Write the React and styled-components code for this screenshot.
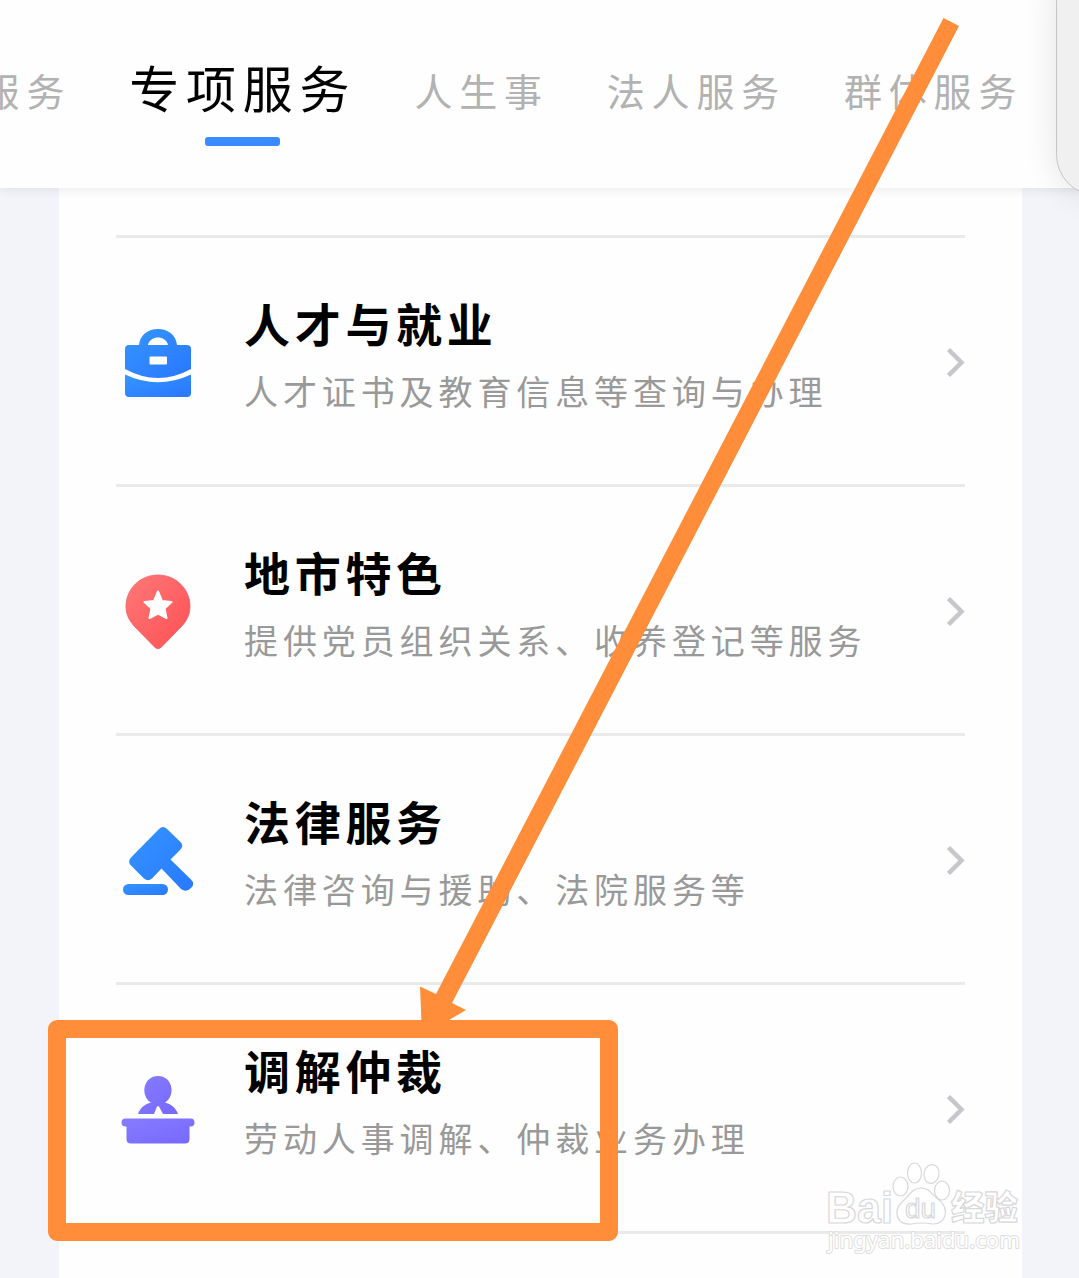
import styled, { createGlobalStyle } from "styled-components";

const GlobalStyle = createGlobalStyle`
  * {
    box-sizing: border-box;
  }

  body {
    margin: 0;
    background-color: #f3f4f9;
    font-family: "Noto Sans CJK SC", sans-serif;
  }
`;

const Page = styled.div`
  position: relative;
  width: 1079px;
  height: 1278px;
  overflow: hidden;
  background-color: #f3f4f9;
`;

const Header = styled.header`
  height: 188px;
  overflow: hidden;
  background-color: #fefefe;
`;

const HeaderShadow = styled.div`
  position: relative;
  z-index: 1;
  box-shadow: 0 1px 10px rgba(0, 0, 0, 0.09);
`;

const TabList = styled.nav`
  display: flex;
  gap: 58px;
  margin-left: -108px;
  padding-top: 50px;
`;

const Tab = styled.div`
  display: flex;
  flex-direction: column;
  align-items: center;
  flex-shrink: 0;
  height: 96px;
  color: ${(props) => (props.$active ? "#000" : "#b2b2b2")};
  font-size: ${(props) => (props.$active ? "50px" : "38px")};
  font-weight: 400;
  letter-spacing: ${(props) => (props.$active ? "6.8px" : "6.8px")};
  line-height: ${(props) => (props.$active ? "72px" : "80px")};
  white-space: nowrap;
`;

const TabLine = styled.div`
  width: 75px;
  height: 9px;
  margin-top: 15px;
  border-radius: 3px;
  background-color: #3a8bff;
`;

const Card = styled.main`
  width: 963px;
  height: 1090px;
  margin-left: 59px;
  padding: 47px 57px 0;
  background-color: #fefefe;
`;

const Row = styled.div`
  display: flex;
  align-items: center;
  height: 249px;
  border-top: 3px solid #eaeaea;
`;

const IconBox = styled.div`
  display: flex;
  width: 84px;
  height: 84px;
  flex-shrink: 0;

  svg {
    width: 84px;
    height: 84px;
  }
`;

const RowText = styled.div`
  display: flex;
  flex-direction: column;
  flex: 1;
  margin-left: 44px;
  padding-bottom: 13px;
`;

const Title = styled.div`
  height: 69px;
  color: #000;
  font-size: 46px;
  font-weight: 700;
  letter-spacing: 4.7px;
  line-height: 66px;
  white-space: nowrap;
`;

const Subtitle = styled.div`
  height: 62px;
  color: #999;
  font-size: 34px;
  font-weight: 400;
  letter-spacing: 4.9px;
  line-height: 65px;
  white-space: nowrap;
`;

const Chevron = styled.svg`
  width: 18px;
  height: 34px;
  flex-shrink: 0;
`;

const LastLine = styled.div`
  height: 3px;
  background-color: #eaeaea;
`;

const FloatPanel = styled.div`
  position: absolute;
  z-index: 2;
  top: -40px;
  right: -60px;
  width: 83px;
  height: 236px;
  border: 1px solid #c6c6c6;
  border-radius: 46px;
  background-color: #f0f0f0;
  box-shadow: 0 0 34px rgba(0, 0, 0, 0.11);
`;

const Overlay = styled.svg`
  position: absolute;
  z-index: 3;
  top: 0;
  left: 0;
  width: 1079px;
  height: 1278px;
`;

const HighlightBox = styled.div`
  position: absolute;
  z-index: 4;
  top: 1020px;
  left: 48px;
  width: 569.5px;
  height: 221px;
  border: 18px solid #ff8d3a;
  border-radius: 9px;
`;

function BriefcaseIcon() {
  return (
    <svg viewBox="0 -2 84 84">
      <defs>
        <linearGradient id="caseBlue" x1="0" y1="0" x2="1" y2="1">
          <stop offset="0" stopColor="#3597ff" />
          <stop offset="1" stopColor="#2976ff" />
        </linearGradient>
      </defs>
      <path
        fill="url(#caseBlue)"
        fillRule="evenodd"
        d="M23 24C24 14 32 8 42 8S60 14 61 24H71Q75 24 75 28V48Q42 66 9 48V28Q9 24 13 24ZM32 24H52C50 14 34 14 32 24ZM33.5 36.5V42.5Q33.5 43.5 34.5 43.5H50Q51 43.5 51 42.5V36.5Q51 35.5 50 35.5H34.5Q33.5 35.5 33.5 36.5Z"
      />
      <path
        fill="url(#caseBlue)"
        d="M9 53.5Q42 69 75 53.5V72Q75 76 71 76H13Q9 76 9 72Z"
      />
    </svg>
  );
}

function PinIcon() {
  return (
    <svg viewBox="0 -1.5 84 84">
      <defs>
        <linearGradient id="pinRed" x1="0" y1="0" x2="1" y2="1">
          <stop offset="0" stopColor="#ff7878" />
          <stop offset="1" stopColor="#ff5054" />
        </linearGradient>
      </defs>
      <path
        fill="url(#pinRed)"
        stroke="#ee6064"
        strokeWidth="0.8"
        d="M42 5.5C60 5.5 74 19.5 74 37C74 46 70 52 65 57.5L45 78Q42 80.5 39 78L19 57.5C14 52 10 46 10 37C10 19.5 24 5.5 42 5.5Z"
      />
      <path
        fill="#fff"
        stroke="#fff"
        strokeWidth="2"
        strokeLinejoin="round"
        d="M42 22L46 31.5L55.5 32.5L48.5 39L50.5 48.5L42 44L33.5 48.5L35.5 39L28.5 32.5L38 31.5Z"
      />
    </svg>
  );
}

function GavelIcon() {
  return (
    <svg viewBox="0 -3 84 84">
      <defs>
        <linearGradient id="gavelBlue" x1="0" y1="0" x2="1" y2="1">
          <stop offset="0" stopColor="#3594ff" />
          <stop offset="1" stopColor="#2979ff" />
        </linearGradient>
      </defs>
      <path
        fill="url(#gavelBlue)"
        d="M43 9Q47 5 51 9L64.5 22Q68 25.5 64.5 29.5L54.5 39.5L75 59.5Q79 63.5 75.5 67.5Q70.5 73 65 69L45.5 48.5L36 58.5Q32 62 28 58.5L14.500 45Q11.5 41.5 15 37.5Z"
      />
      <rect x="7" y="64" width="45" height="11" rx="5.5" fill="url(#gavelBlue)" />
    </svg>
  );
}

function MediatorIcon() {
  return (
    <svg viewBox="0 -4 84 84">
      <defs>
        <linearGradient id="deskPurple" x1="0" y1="0" x2="1" y2="1">
          <stop offset="0" stopColor="#867cff" />
          <stop offset="1" stopColor="#7668ff" />
        </linearGradient>
      </defs>
      <path
        fill="url(#deskPurple)"
        d="M35 32.5C24 26 27 6 42 6S60 26 49 32.5C55 34 60 38 62 44H47L43 36.5Q42 35.5 41 36.5L38 44H22C24 38 29 34 35 32.5Z"
      />
      <path
        fill="url(#deskPurple)"
        d="M9.5 48.5H74.5Q78.5 48.5 78.5 52.5T74.5 56.5H73.5V69Q73.5 73.5 69 73.5H15Q10.5 73.5 10.5 69V56.5H9.5Q5.5 56.5 5.5 52.5T9.5 48.5Z"
      />
    </svg>
  );
}

function Watermark() {
  return (
    <g fill="#fff" stroke="#d8d8d8" strokeWidth="1.2" strokeLinejoin="round">
      <text
        x="826"
        y="1223"
        fontFamily="Liberation Sans"
        fontSize="44"
        fontWeight="700"
        textLength="67"
        lengthAdjust="spacingAndGlyphs"
      >
        Bai
      </text>
      <ellipse cx="900.5" cy="1186.5" rx="7.5" ry="9.5" />
      <ellipse cx="914.5" cy="1173" rx="7" ry="10" />
      <ellipse cx="931.5" cy="1174" rx="7.5" ry="9.5" transform="rotate(10 931.5 1174)" />
      <ellipse cx="942" cy="1190.5" rx="7.5" ry="9.5" />
      <path d="M921 1188C930 1188 932 1195 939 1200C950 1209 946 1224 933 1224Q921 1222 911 1224C896 1225 893 1211 902 1202C909 1197 911 1188 921 1188Z" />
      <text
        x="905"
        y="1218"
        fontFamily="Liberation Sans"
        fontSize="27"
        textLength="31"
        lengthAdjust="spacingAndGlyphs"
      >
        du
      </text>
      <text
        x="951"
        y="1220"
        fontFamily="Noto Sans CJK SC"
        fontSize="34"
        fontWeight="900"
        textLength="67"
        lengthAdjust="spacingAndGlyphs"
      >
        经验
      </text>
      <text
        x="828"
        y="1248"
        fontFamily="Noto Sans"
        fontSize="22"
        strokeWidth="2"
        paintOrder="stroke"
        stroke="#dedede"
        textLength="192"
        lengthAdjust="spacingAndGlyphs"
      >
        jingyan.baidu.com
      </text>
    </g>
  );
}

const tabs = [
  { name: "个人服务" },
  { name: "专项服务", active: true },
  { name: "人生事" },
  { name: "法人服务" },
  { name: "群体服务" },
];

const services = [
  {
    title: "人才与就业",
    subtitle: "人才证书及教育信息等查询与办理",
    icon: <BriefcaseIcon />,
  },
  {
    title: "地市特色",
    subtitle: "提供党员组织关系、收养登记等服务",
    icon: <PinIcon />,
  },
  {
    title: "法律服务",
    subtitle: "法律咨询与援助、法院服务等",
    icon: <GavelIcon />,
  },
  {
    title: "调解仲裁",
    subtitle: "劳动人事调解、仲裁业务办理",
    icon: <MediatorIcon />,
  },
];

function App() {
  return (
    <>
      <GlobalStyle />
      <Page>
        <HeaderShadow>
          <Header>
            <TabList>
              {tabs.map((tab) => (
                <Tab key={tab.name} $active={tab.active}>
                  {tab.name}
                  {tab.active && <TabLine />}
                </Tab>
              ))}
            </TabList>
          </Header>
        </HeaderShadow>
        <Card>
          {services.map((item) => (
            <Row key={item.title}>
              <IconBox>{item.icon}</IconBox>
              <RowText>
                <Title>{item.title}</Title>
                <Subtitle>{item.subtitle}</Subtitle>
              </RowText>
              <Chevron viewBox="0 0 18 34">
                <path
                  d="M1.5 5.5L14.5 18.5L1.5 31.5"
                  fill="none"
                  stroke="#c7c7cb"
                  strokeWidth="4.5"
                />
              </Chevron>
            </Row>
          ))}
          <LastLine />
        </Card>
        <FloatPanel />
        <Overlay viewBox="0 0 1079 1278">
          <Watermark />
          <path
            fill="#ff8d3a"
            d="M943.5 18L959 26L452 1003L466 1010L422 1036L420 986.5L436 994Z"
          />
        </Overlay>
        <HighlightBox />
      </Page>
    </>
  );
}

export default App;
